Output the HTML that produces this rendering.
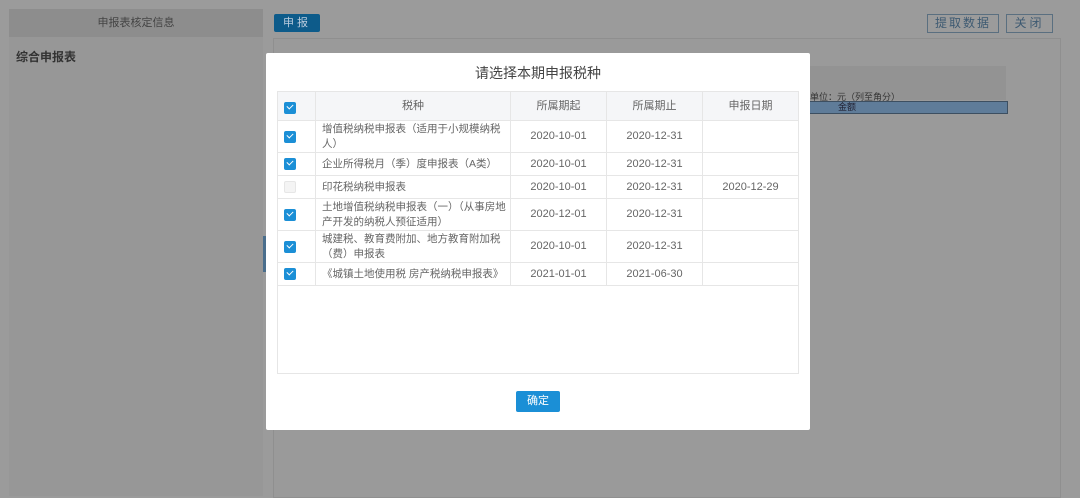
<!DOCTYPE html>
<html><head><meta charset="utf-8"><style>
body{margin:0;width:1080px;height:496px;background:#9b9b9b;font-family:"Liberation Sans","Noto Sans CJK SC",sans-serif;position:relative;overflow:hidden}
.a{position:absolute}
.cb{position:absolute;left:6px;width:12px;height:12px;border-radius:2px;background:#1b8fd6}
.cb:after{content:"";position:absolute;left:3px;top:2px;width:5px;height:3px;border-left:1.5px solid #fff;border-bottom:1.5px solid #fff;transform:rotate(-45deg)}
.cb.off{background:#f4f4f4;border:1px solid #e6e6e6;width:10px;height:10px}
.cb.off:after{display:none}
table{border-collapse:collapse;font-size:11px;color:#666;table-layout:fixed}
td{border:1px solid #e6e6e6;text-align:center;padding:0;position:relative;line-height:15px;white-space:nowrap;overflow:hidden}
td.l{text-align:left;padding-left:6px;font-size:10.5px}
</style></head><body>
<div class="a" style="left:9px;top:9px;width:254px;height:28px;background:#8d8d8d;color:#444;font-size:11px;text-align:center;line-height:28px">申报表核定信息</div>
<div class="a" style="left:9px;top:37px;width:254px;height:459px;background:#979797"></div>
<div class="a" style="left:16px;top:48px;font-size:12px;font-weight:bold;color:#333">综合申报表</div>
<div class="a" style="left:274px;top:14px;width:46px;height:18px;background:#0d5b8a;border-radius:2px;color:#bcd;font-size:11px;text-align:center;line-height:18px;letter-spacing:3px">申报</div>
<div class="a" style="left:927px;top:14px;width:70px;height:17px;border:1px solid #5a6f80;color:#3e5a72;font-size:12px;text-align:center;line-height:17px;letter-spacing:2px">提取数据</div>
<div class="a" style="left:1006px;top:14px;width:45px;height:17px;border:1px solid #5a6f80;color:#3e5a72;font-size:12px;text-align:center;line-height:17px;letter-spacing:3px">关闭</div>
<div class="a" style="left:273px;top:38px;width:786px;height:458px;border:1px solid #8f8f8f;background:#9a9a9a"></div>
<div class="a" style="left:800px;top:66px;width:206px;height:34px;background:#939393"></div>
<div class="a" style="left:810px;top:90px;font-size:9px;color:#333">单位：元（列至角分）</div>
<div class="a" style="left:800px;top:101px;width:206px;height:11px;background:#5f7c99;border:1px solid #3d4f61;font-size:9px;color:#223;line-height:11px;text-indent:37px">金额</div>
<div class="a" style="left:263px;top:236px;width:3px;height:36px;background:#4a6e8c"></div>
<div class="a" style="left:266px;top:53px;width:544px;height:377px;background:#fff;border-radius:2px">
<div style="text-align:center;font-size:14px;color:#444;margin-top:10px">请选择本期申报税种</div>
<div class="a" style="left:11px;top:38px;width:520px;height:281px;border:1px solid #e6e6e6"></div>
<table class="a" style="left:11px;top:38px;width:522px">
<tr style="height:29px;background:#f5f6f8"><td style="width:37px"><span class="cb" style="left:6px;top:10px"></span></td><td style="width:194px">税种</td><td style="width:95px">所属期起</td><td style="width:95px">所属期止</td><td>申报日期</td></tr>
<tr style="height:32px"><td><span class="cb" style="top:10px"></span></td><td class="l">增值税纳税申报表（适用于小规模纳税<br>人）</td><td>2020-10-01</td><td>2020-12-31</td><td></td></tr>
<tr style="height:23px"><td><span class="cb" style="top:5px"></span></td><td class="l">企业所得税月（季）度申报表（A类）</td><td>2020-10-01</td><td>2020-12-31</td><td></td></tr>
<tr style="height:23px"><td><span class="cb off" style="top:5px"></span></td><td class="l">印花税纳税申报表</td><td>2020-10-01</td><td>2020-12-31</td><td>2020-12-29</td></tr>
<tr style="height:32px"><td><span class="cb" style="top:10px"></span></td><td class="l">土地增值税纳税申报表（一）（从事房地<br>产开发的纳税人预征适用）</td><td>2020-12-01</td><td>2020-12-31</td><td></td></tr>
<tr style="height:32px"><td><span class="cb" style="top:10px"></span></td><td class="l">城建税、教育费附加、地方教育附加税<br>（费）申报表</td><td>2020-10-01</td><td>2020-12-31</td><td></td></tr>
<tr style="height:23px"><td><span class="cb" style="top:5px"></span></td><td class="l">《城镇土地使用税 房产税纳税申报表》</td><td>2021-01-01</td><td>2021-06-30</td><td></td></tr>
</table>
<div class="a" style="left:250px;top:338px;width:44px;height:21px;background:#1b8fd6;border-radius:2px;color:#fff;font-size:11px;text-align:center;line-height:21px">确定</div>
</div>
</body></html>
